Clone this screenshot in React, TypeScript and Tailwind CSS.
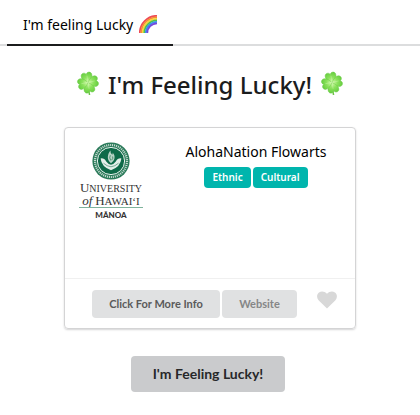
import { useId, useState } from "react";

function Rainbow() {
  const bands = ["#ee4a55", "#f68b35", "#f7d53b", "#4fc447", "#3a93ee", "#7448dc"];
  return (
    <svg viewBox="0 0 18 18" className="mb-0.5 h-[18px] w-[18px] shrink-0" aria-hidden="true">
      {bands.map((color, i) => {
        const r = 17.2 - i * 1.5;
        return (
          <path
            key={color}
            d={`M${18 - r} 18 A${r} ${r} 0 0 1 18 ${18 - r}`}
            fill="none"
            stroke={color}
            strokeWidth="1.8"
          />
        );
      })}
    </svg>
  );
}

function Clover() {
  const id = useId();
  return (
    <svg viewBox="0 0 24 24" className="mb-1 h-6 w-6 shrink-0" aria-hidden="true">
      <defs>
        <radialGradient id={id} cx="12" cy="11" r="11" gradientUnits="userSpaceOnUse">
          <stop offset="0" stopColor="#d0f8a8" />
          <stop offset="0.45" stopColor="#8be25c" />
          <stop offset="1" stopColor="#5fc93a" />
        </radialGradient>
      </defs>
      <path d="M11.8 11.5 Q12.3 18 13.5 23.6" fill="none" stroke="#6cc248" strokeWidth="1.5" strokeLinecap="round" />
      <g fill={`url(#${id})`} stroke="#62c63e" strokeWidth="0.4">
        {[-12, 78, 168, 258].map((angle) => (
          <path
            key={angle}
            transform={`rotate(${angle} 12 11.6)`}
            d="M12 11.6 C9.2 9.6 6.2 7.4 6.6 3.9 C7 1.2 10.6 0.4 12 3.2 C13.4 0.4 17 1.2 17.4 3.9 C17.8 7.4 14.8 9.6 12 11.6Z"
          />
        ))}
      </g>
      <g stroke="#d3f9b4" strokeWidth="0.6" strokeLinecap="round" opacity="0.7">
        <path d="M12 11.4 L11 5 M12 11.4 L18.3 10 M12 11.4 L13 17.4 M12 11.4 L5.8 12.6" />
      </g>
    </svg>
  );
}

function Seal() {
  return (
    <svg viewBox="0 0 38 38" className="h-[38px] w-[38px]" aria-hidden="true">
      <circle cx="19" cy="19" r="18.6" fill="#2b7a5a" />
      <circle cx="19" cy="19" r="16" fill="none" stroke="#c4dbd0" strokeWidth="2.2" strokeDasharray="1.1 0.9" />
      <circle cx="19" cy="19" r="13.6" fill="#0e6a48" stroke="#e6f1ec" strokeWidth="1" />
      <path d="M8.6 16.4 Q12.2 15.8 14.2 19.6 Q16.4 22.6 19 22.8 Q21.6 22.6 23.8 19.6 Q25.8 15.8 29.4 16.4 Q28.6 24.6 19 28.2 Q9.4 24.6 8.6 16.4Z" fill="#e4efe9" />
      <path d="M11.5 21.2 Q15 24.4 19 24.8 Q23 24.4 26.5 21.2" fill="none" stroke="#5c987d" strokeWidth="0.8" />
      <path d="M19 21.2 C14.4 18 15.4 12.4 18.4 8.6 Q18.3 11.8 20.3 12.8 Q21 11.6 20.6 10.6 C24 14.2 22.8 18.8 19 21.2Z" fill="#b9d3c6" />
      <path d="M18.8 18.5 Q16.9 15.8 18.3 13.2 M19.7 18 Q21.5 16.3 20.6 14.5" fill="none" stroke="#38815f" strokeWidth="0.8" />
    </svg>
  );
}

function UniversityLogo() {
  return (
    <div className="flex w-16 flex-col items-center font-['Liberation_Serif',serif] text-[#333]">
      <Seal />
      <div className="mt-0.5 whitespace-nowrap text-center text-[10px] leading-3">
        <div>
          <span className="text-[13px]">U</span>NIVERSITY
        </div>
        <div className="text-[11px]">
          <i className="text-[13px]">of</i> <span className="text-[13px]">H</span>AWAI‘I
        </div>
      </div>
      <div className="h-px w-full bg-[#7fb39c]" />
      <div className="whitespace-nowrap font-['Lato',sans-serif] text-[8px] font-black leading-[14px]">
        MĀNOA
      </div>
    </div>
  );
}

function Tag({ children }: { children: string }) {
  return (
    <span className="rounded bg-[#00b5ad] px-2 py-1 text-[10px] font-semibold leading-[13px] text-white">
      {children}
    </span>
  );
}

export default function App() {
  const [liked, setLiked] = useState(false);
  return (
    <main className="bg-white font-['Noto_Sans',sans-serif] text-[#1b1c1d]">
      <nav className="flex border-b-2 border-[#dcddde] pl-[7px]">
        <a
          href="#lucky"
          className="-mb-0.5 flex h-[46px] items-center gap-1.5 border-b-2 border-[#1b1c1d] pl-4 pr-4 pt-1.5 text-sm text-black"
        >
          I'm feeling Lucky <Rainbow />
        </a>
      </nav>

      <h1 className="mt-[23px] flex items-center justify-center gap-2 text-2xl font-medium leading-8">
        <Clover />
        I'm Feeling Lucky!
        <Clover />
      </h1>

      <article className="mx-auto mt-[26px] w-full max-w-[292px] rounded border border-[#d4d4d5] shadow-[0_1px_2px_0_#d4d4d5]">
        <div className="flex h-[150px] px-3.5 pt-3.5">
          <UniversityLogo />
          <div className="flex-1 pl-7">
            <div className="flex flex-col items-center">
              <h2 className="whitespace-nowrap text-sm leading-5 text-black">AlohaNation Flowarts</h2>
              <div className="mt-[5px] flex gap-0.5">
                <Tag>Ethnic</Tag>
                <Tag>Cultural</Tag>
              </div>
            </div>
          </div>
        </div>
        <footer className="flex items-center border-t border-[#f0f0f0] pb-2.5 pl-[27px] pt-[11px] font-['Lato',sans-serif]">
          <button
            type="button"
            className="h-7 w-32 rounded bg-[#e0e1e2] text-[11px] font-bold text-[#5a5a5a]"
          >
            Click For More Info
          </button>
          <a
            href="#website"
            className="ml-0.5 flex h-7 w-[75px] items-center justify-center rounded bg-[#e0e1e2] text-[11px] font-bold text-[#858687]"
          >
            Website
          </a>
          <button
            type="button"
            aria-label="Like"
            aria-pressed={liked}
            onClick={() => setLiked(!liked)}
            className="mb-2 ml-5 text-[#d8d8d8] aria-pressed:text-[#ff2733]"
          >
            <svg viewBox="0 0 20 18" className="h-[18px] w-5" fill="currentColor" aria-hidden="true">
              <path d="M10 17.6 L1.8 9.4 C-0.6 7 -0.4 3.1 2 1.4 C4.4 -0.3 7.6 0.1 10 2.8 C12.4 0.1 15.6 -0.3 18 1.4 C20.4 3.1 20.6 7 18.2 9.4Z" />
            </svg>
          </button>
        </footer>
      </article>

      <div className="mt-[27px] flex justify-center pr-1">
        <button
          type="button"
          className="h-9 w-[154px] rounded bg-[#cacbcd] font-['Lato',sans-serif] text-sm font-bold text-[#272829]"
        >
          I'm Feeling Lucky!
        </button>
      </div>
    </main>
  );
}
